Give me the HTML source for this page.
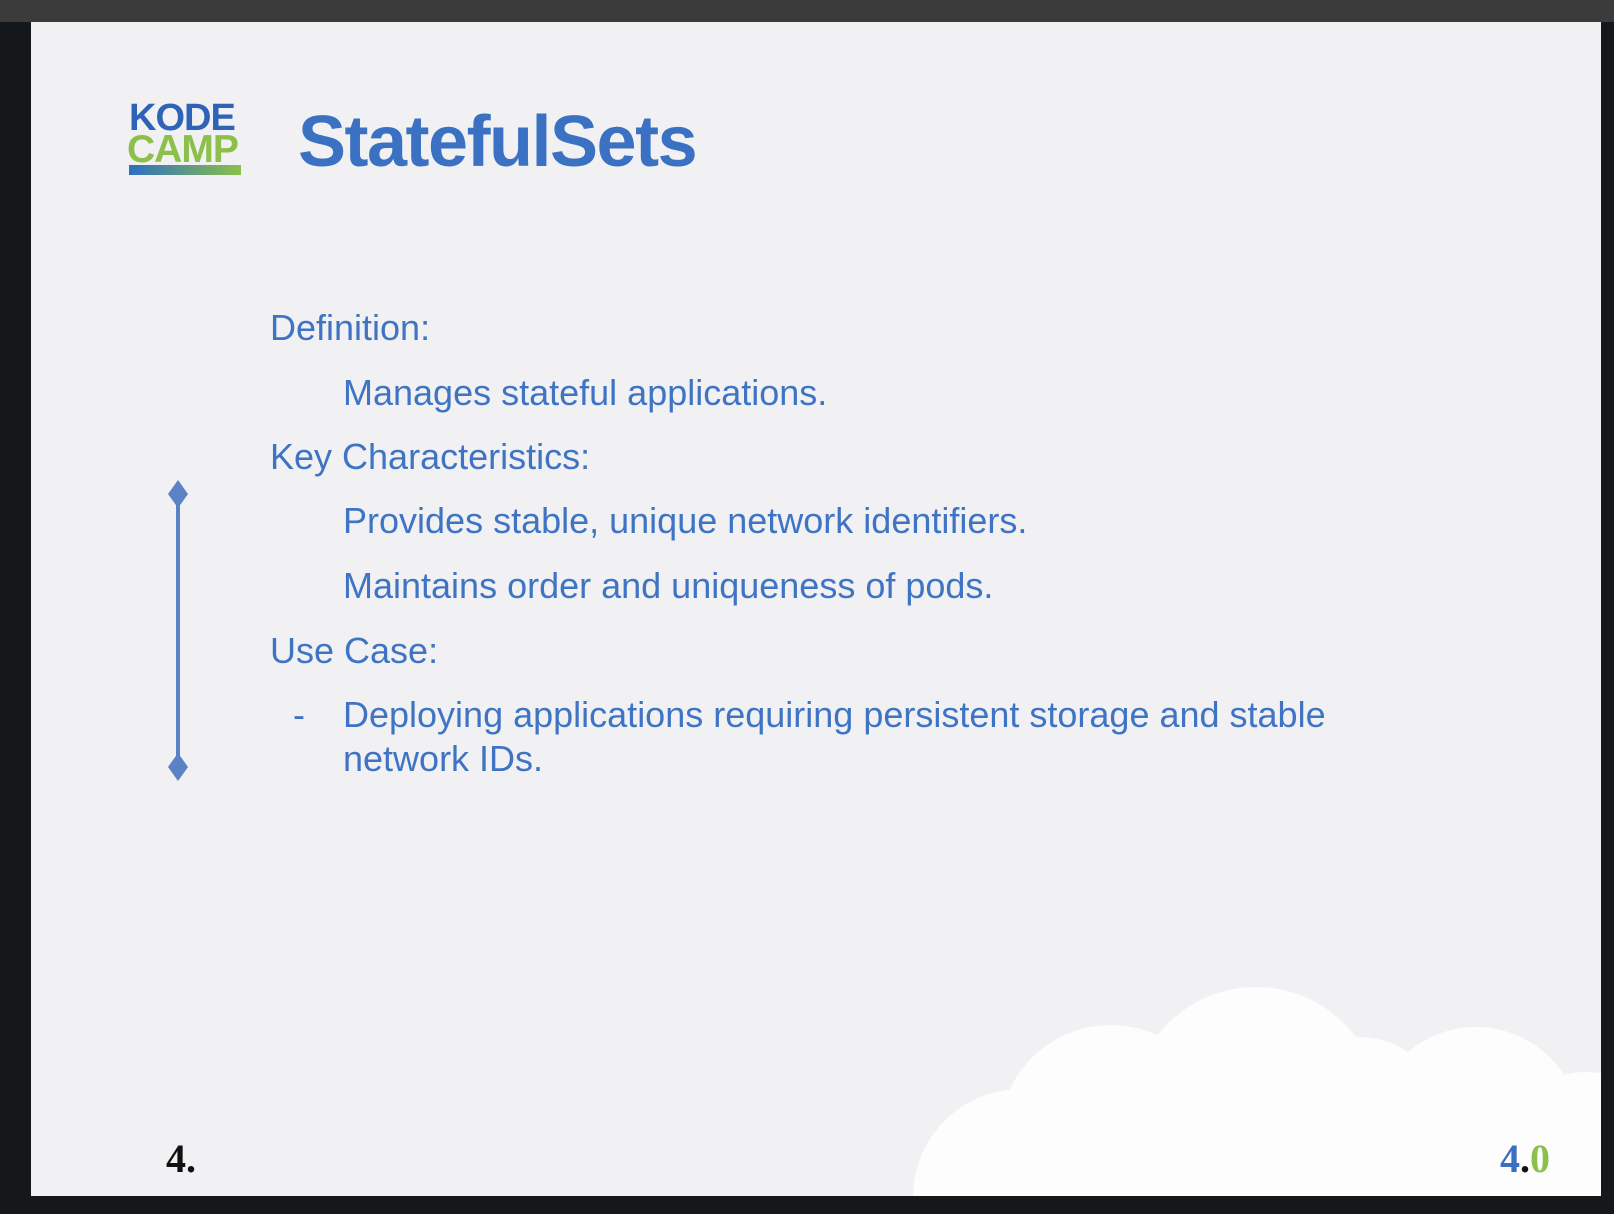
<!DOCTYPE html>
<html><head><meta charset="utf-8"><style>
html,body{margin:0;padding:0;width:1614px;height:1214px;overflow:hidden;background:#15181b;font-family:"Liberation Sans",sans-serif}
.top{position:absolute;left:0;top:0;width:1614px;height:22px;background:#3b3b3b}
.slide{position:absolute;left:31px;top:22px;width:1570px;height:1174px;background:#f1f0f2;overflow:hidden}
.t{position:absolute;white-space:nowrap;color:#3f74c4;font-size:36px;line-height:1}
</style></head><body>
<div class="top"></div>
<div class="slide">
<svg width="1570" height="1174" style="position:absolute;left:0;top:0">
<g fill="#fdfdfd">
<circle cx="1225" cy="1090" r="125"/>
<circle cx="1080" cy="1115" r="112"/>
<circle cx="990" cy="1175" r="108"/>
<circle cx="1330" cy="1095" r="80"/>
<circle cx="1445" cy="1110" r="105"/>
<circle cx="1555" cy="1140" r="90"/>
<rect x="905" y="1120" width="665" height="60"/>
</g>
<g fill="#5a82c4">
<rect x="145" y="472" width="4" height="273"/>
<polygon points="147,458 157,472 147,486 137,472"/>
<polygon points="147,731 157,745 147,759 137,745"/>
</g>
</svg>
<div class="t" style="left:98px;top:77px;font-size:38px;font-weight:bold;color:#2e63b8;letter-spacing:-1px">KODE</div>
<div class="t" style="left:96px;top:108px;font-size:39px;font-weight:bold;color:#8cc04a;letter-spacing:-1px">CAMP</div>
<div style="position:absolute;left:98px;top:143px;width:112px;height:10px;background:linear-gradient(90deg,#2e6fc0,#8cc04a)"></div>
<div class="t" style="left:267px;top:84px;font-size:72px;font-weight:bold;color:#3a71c2;letter-spacing:-1.5px">StatefulSets</div>
<div class="t" style="left:239px;top:288px">Definition:</div>
<div class="t" style="left:312px;top:353px">Manages stateful applications.</div>
<div class="t" style="left:239px;top:417px">Key Characteristics:</div>
<div class="t" style="left:312px;top:481px">Provides stable, unique network identifiers.</div>
<div class="t" style="left:312px;top:546px">Maintains order and uniqueness of pods.</div>
<div class="t" style="left:239px;top:611px">Use Case:</div>
<div class="t" style="left:262px;top:675px">-</div>
<div class="t" style="left:312px;top:675px">Deploying applications requiring persistent storage and stable</div>
<div class="t" style="left:312px;top:719px">network IDs.</div>
<div class="t" style="left:135px;top:1117px;font-family:'Liberation Serif',serif;font-weight:bold;font-size:40px;color:#111">4.</div>
<div class="t" style="left:1469px;top:1117px;font-family:'Liberation Serif',serif;font-weight:bold;font-size:40px;color:#3a6fc2">4<span style="color:#111">.</span><span style="color:#8cc04a">0</span></div>
</div>
</body></html>
